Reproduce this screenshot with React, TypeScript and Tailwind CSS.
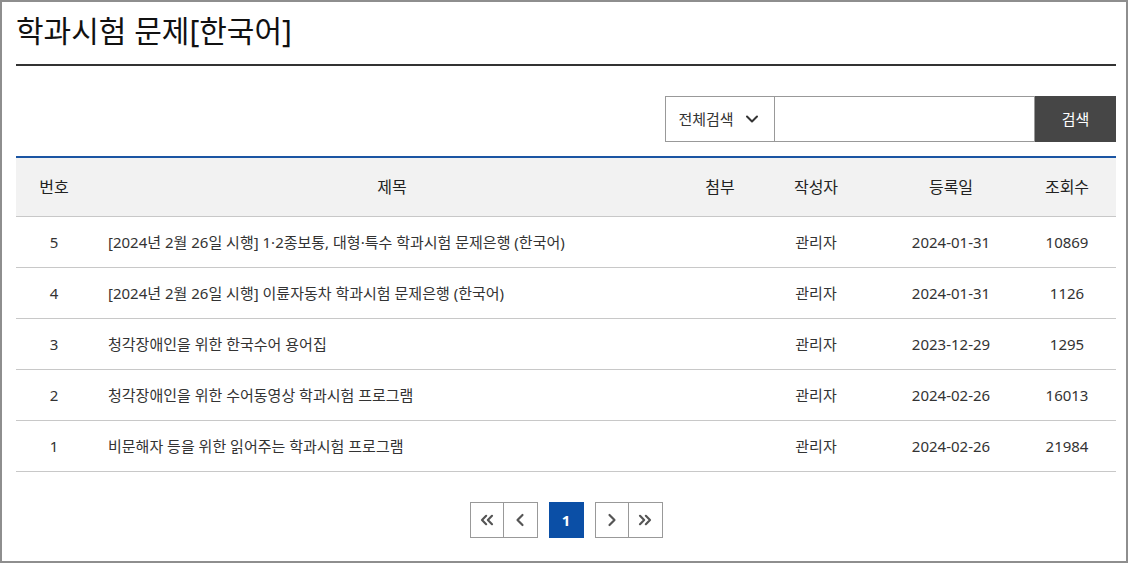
import { ChevronDown, ChevronLeft, ChevronRight, ChevronsLeft, ChevronsRight } from "lucide-react";

const rows = [
  { no: 5, title: "[2024년 2월 26일 시행] 1·2종보통, 대형·특수 학과시험 문제은행 (한국어)", date: "2024-01-31", views: "10869" },
  { no: 4, title: "[2024년 2월 26일 시행] 이륜자동차 학과시험 문제은행 (한국어)", date: "2024-01-31", views: "1126" },
  { no: 3, title: "청각장애인을 위한 한국수어 용어집", date: "2023-12-29", views: "1295" },
  { no: 2, title: "청각장애인을 위한 수어동영상 학과시험 프로그램", date: "2024-02-26", views: "16013" },
  { no: 1, title: "비문해자 등을 위한 읽어주는 학과시험 프로그램", date: "2024-02-26", views: "21984" },
];

const cols = "grid grid-cols-[76px_600px_56px_136px_134px_98px]";

export default function App() {
  return (
    <div
      className="h-[563px] w-[1128px] overflow-hidden border-2 border-[#8e8e8e] bg-white pr-[10px] pl-[14px] text-[#222]"
      style={{ fontFamily: '"Noto Sans", "Noto Sans CJK KR", sans-serif' }}
    >
      <h1 className="pt-[8px] pb-[13px] text-[30px] leading-[41px] text-[#111]">학과시험 문제[한국어]</h1>
      <div className="h-[2px] bg-[#333]" />

      <div className="mt-[30px] flex justify-end">
        <div className="flex h-[46px]">
          <button className="flex w-[110px] items-center justify-center gap-2 border border-[#999] bg-white text-[15px] text-[#333]">
            전체검색
            <ChevronDown size={20} strokeWidth={2.4} />
          </button>
          <input className="w-[260px] border border-l-0 border-[#999] outline-none" />
          <button className="w-[81px] bg-[#464646] text-[15px] text-white">검색</button>
        </div>
      </div>

      <div className="mt-[14px] border-t-2 border-[#1b55a3]">
        <div className={`${cols} h-[59px] items-center border-b border-[#c8c8c8] bg-[#f2f2f2] text-center text-[16px] text-[#222]`}>
          <div>번호</div>
          <div>제목</div>
          <div>첨부</div>
          <div>작성자</div>
          <div>등록일</div>
          <div>조회수</div>
        </div>
        {rows.map((r) => (
          <div key={r.no} className={`${cols} h-[51px] items-center border-b border-[#c8c8c8] text-center text-[15px] text-[#333]`}>
            <div>{r.no}</div>
            <div className="pl-4 text-left">{r.title}</div>
            <div />
            <div>관리자</div>
            <div>{r.date}</div>
            <div>{r.views}</div>
          </div>
        ))}
      </div>

      <div className="mt-[30px] flex justify-center gap-[11px]">
        <div className="flex">
          <button className="flex h-[36px] w-[34px] items-center justify-center border border-[#999] text-[#555]">
            <ChevronsLeft size={20} strokeWidth={2.6} />
          </button>
          <button className="flex h-[36px] w-[34px] items-center justify-center border border-l-0 border-[#999] text-[#555]">
            <ChevronLeft size={20} strokeWidth={2.6} />
          </button>
        </div>
        <button className="h-[36px] w-[35px] bg-[#0b4fa6] text-[15px] font-bold text-white">1</button>
        <div className="flex">
          <button className="flex h-[36px] w-[34px] items-center justify-center border border-[#999] text-[#555]">
            <ChevronRight size={20} strokeWidth={2.6} />
          </button>
          <button className="flex h-[36px] w-[34px] items-center justify-center border border-l-0 border-[#999] text-[#555]">
            <ChevronsRight size={20} strokeWidth={2.6} />
          </button>
        </div>
      </div>
    </div>
  );
}
